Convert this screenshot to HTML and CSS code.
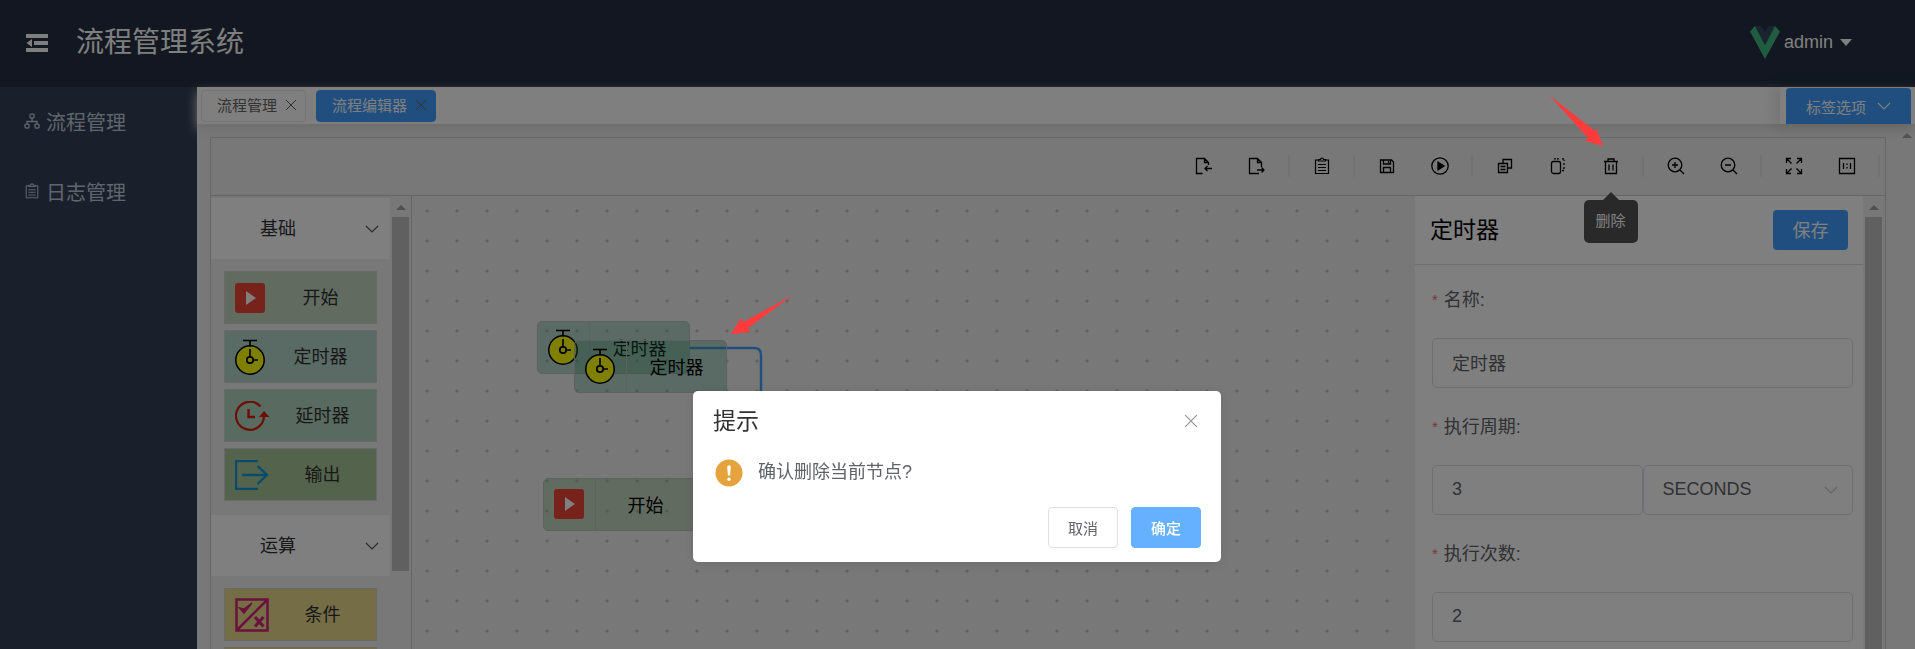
FILE: index.html
```html
<!DOCTYPE html>
<html lang="zh-CN">
<head>
<meta charset="utf-8">
<title>流程管理系统</title>
<link rel="stylesheet" href="styles.css">
</head>
<body>
<svg class="defs" aria-hidden="true">
  <symbol id="i-start" viewBox="0 0 30 30"><rect width="30" height="30" rx="3" fill="#f04438"/><path d="M11 8l10 7-10 7z" fill="#fff"/></symbol>
  <symbol id="i-timer" viewBox="0 0 30 36"><circle cx="15" cy="21" r="14.2" fill="#ff0" stroke="#000" stroke-width="1.5"/><path d="M8 1.500h14M15 1.500v6M15 10v8M18 21h5" stroke="#000" stroke-width="1.600" fill="none"/><circle cx="15" cy="21" r="3.200" fill="none" stroke="#000" stroke-width="1.800"/></symbol>
  <symbol id="i-delay" viewBox="0 0 34 30"><path d="M25.500 5.500A14 14 0 1 0 29 15" fill="none" stroke="#d81e06" stroke-width="2.200"/><path d="M24 16l5-6 5.500 6z" fill="#d81e06"/><path d="M13.500 8v8h6.500" fill="none" stroke="#d81e06" stroke-width="2.400"/></symbol>
  <symbol id="i-out" viewBox="0 0 34 30"><path d="M23 1H1v28h22M7 15h25M22.500 6L32 15l-9.500 9" fill="none" stroke="#1296db" stroke-width="2.400"/></symbol>
  <symbol id="i-cond" viewBox="0 0 34 34"><path d="M1.500 1.500h31v31h-31zM2 32L32 2" fill="none" stroke="#d4237a" stroke-width="2.500"/><path d="M4.500 10l4.500 5 8-10-8 6z" fill="#d4237a" stroke="#d4237a" stroke-width="1.500"/><path d="M20 19l8.500 9.500M28.500 19L20 28.500" stroke="#d4237a" stroke-width="3"/></symbol>
  <symbol id="i-down" viewBox="0 0 14 14"><path d="M1 4l6 6 6-6" fill="none" stroke="currentColor" stroke-width="1.100"/></symbol>
  <symbol id="i-x" viewBox="0 0 12 12"><path d="M1 1l10 10M11 1L1 11" fill="none" stroke="currentColor" stroke-width="1"/></symbol>
  <symbol id="i-list" viewBox="0 0 18 18"><path d="M5 3H2.500v13.500h13V3H13M5.500 4V2.500h2a1.500 1.500 0 0 1 3 0h2V4zM5 7.500h8M5 10.500h8M5 13.500h8" fill="none" stroke="currentColor" stroke-width="1.200"/></symbol>
</svg>

<header class="header">
  <button class="fold" aria-label="折叠菜单"><svg width="22" height="18" viewBox="0 0 22 18"><path d="M0 0h22v4H0zM8 7h14v4H8zM0 14h22v4H0zM6 5v8L0.500 9z" fill="currentColor"/></svg></button>
  <h1 class="logo">流程管理系统</h1>
  <button class="user"><svg width="30" height="33" viewBox="0 0 30 33"><path d="M5 0h6l4 6 4-6h6L15 18z" fill="#35495e"/><path d="M5 0L0 5.500 15 33 30 5.500 25 0 15 19z" fill="#41b883"/></svg>admin<i class="caret"></i></button>
</header>

<div class="body">
  <nav class="side">
    <a href="#flow" class="side-item"><svg width="16" height="16" viewBox="0 0 16 16" fill="none" stroke="currentColor" stroke-width="1.300"><circle cx="8" cy="3" r="2.200"/><circle cx="3" cy="13" r="2.200"/><circle cx="13" cy="13" r="2.200"/><path d="M8 5v3M3 11V8.500h10V11"/></svg>流程管理</a>
    <a href="#log" class="side-item"><svg width="16" height="18"><use href="#i-list"/></svg>日志管理</a>
  </nav>

  <main class="main">
    <div class="tags">
      <div class="tag"><a href="#flow">流程管理</a><button aria-label="关闭流程管理"><svg width="12" height="12"><use href="#i-x"/></svg></button></div>
      <div class="tag tag-on"><a href="#editor">流程编辑器</a><button aria-label="关闭流程编辑器"><svg width="12" height="12"><use href="#i-x"/></svg></button></div>
      <div class="tags-menu"><button>标签选项<svg width="14" height="14"><use href="#i-down"/></svg></button></div>
    </div>

    <div class="content">
      <div class="editor">
        <div class="toolbar">
          <button aria-label="导入"><svg viewBox="0 0 18 18"><path d="M7.500 16.500h-6v-15h8l4 4V8M9.500 1.500v4h4M17 11.500H10M12.500 9L10 11.500l2.500 2.500"/></svg></button>
          <button aria-label="导出"><svg viewBox="0 0 18 18"><path d="M11 16.500H1.500v-15h8l4 4V10M9.500 1.500v4h4M9 13h7M13.500 10.500L16 13l-2.500 2.500"/></svg></button>
          <i class="sep"></i>
          <button aria-label="日志"><svg><use href="#i-list"/></svg></button>
          <i class="sep"></i>
          <button aria-label="保存流程"><svg viewBox="0 0 18 18"><path d="M2.500 3h11l2 2v10.500h-13zM5.500 3v4h7V3M5.500 15.500v-5h7v5M10.500 4v2"/></svg></button>
          <button aria-label="运行"><svg viewBox="0 0 18 18"><circle cx="9" cy="9" r="8.200"/><path d="M7 5.200v7.600L13 9z" fill="currentColor"/></svg></button>
          <i class="sep"></i>
          <button aria-label="复制"><svg viewBox="0 0 18 18"><path d="M7 6V2.500h8.500v8.500H12M2.500 6.500h9v9h-9zM4.500 9.500h5M4.500 12.500h5"/></svg></button>
          <button aria-label="粘贴"><svg viewBox="0 0 18 18"><rect x="2.500" y="4.500" width="9" height="12" rx="2"/><path d="M5 1.800h6M13 1.800h2V4M15 6v2M15 10v2M15 13.500h-2" stroke-dasharray="2 1"/></svg></button>
          <div class="tip-anchor">
            <button aria-label="删除" aria-describedby="tip"><svg viewBox="0 0 18 18"><path d="M2 4.500h14M6 4V2h6v2M3.500 4.500v12h11v-12M7 7.500v6M11 7.500v6"/></svg></button>
            <div class="tip" id="tip" role="tooltip">删除</div>
          </div>
          <i class="sep"></i>
          <button aria-label="放大"><svg viewBox="0 0 18 18"><circle cx="8" cy="8" r="6.800"/><path d="M13 13l4 4M8 5v6M5 8h6"/></svg></button>
          <button aria-label="缩小"><svg viewBox="0 0 18 18"><circle cx="8" cy="8" r="6.800"/><path d="M13 13l4 4M5 8h6"/></svg></button>
          <i class="sep"></i>
          <button aria-label="适应画布"><svg viewBox="0 0 18 18"><path d="M1.500 6V1.500H6M1.500 1.500L6.500 6.500M12 1.500h4.500V6M16.500 1.500l-5 5M1.500 12v4.500H6M1.500 16.500l5-5M16.500 12v4.500H12M16.500 16.500l-5-5"/></svg></button>
          <button aria-label="实际尺寸"><svg viewBox="0 0 18 18"><path d="M1.500 1.500h15v15h-15zM5.500 6v6M12.500 6v6M9 6.500v1.500M9 10v1.500"/></svg></button>
          <i class="sep"></i>
        </div>

        <div class="work">
          <aside class="palette">
            <div class="groups">
              <button class="group-head"><span>基础</span><svg width="14" height="14"><use href="#i-down"/></svg></button>
              <div class="group">
                <div class="item c-start"><svg width="30" height="30"><use href="#i-start"/></svg><span>开始</span></div>
                <div class="item c-timer"><svg width="30" height="36"><use href="#i-timer"/></svg><span>定时器</span></div>
                <div class="item c-delay"><svg width="34" height="30"><use href="#i-delay"/></svg><span>延时器</span></div>
                <div class="item c-out"><svg width="34" height="30"><use href="#i-out"/></svg><span>输出</span></div>
              </div>
              <button class="group-head"><span>运算</span><svg width="14" height="14"><use href="#i-down"/></svg></button>
              <div class="group">
                <div class="item c-cond"><svg width="34" height="34"><use href="#i-cond"/></svg><span>条件</span></div>
                <div class="item c-cond"></div>
              </div>
            </div>
            <div class="bar"><i class="bar-up"></i><i class="bar-thumb thumb-part"></i></div>
          </aside>

          <div class="canvas">
            <svg class="edge" width="80" height="120" viewBox="0 0 80 120"><path d="M0 2h64q7 0 7 7v111" fill="none" stroke="#409eff" stroke-width="2.500"/></svg>
            <div class="node c-timer node-old"><span class="node-icon"><svg width="30" height="36"><use href="#i-timer"/></svg></span><span class="node-name">定时器</span></div>
            <div class="node c-timer node-new"><span class="node-icon"><svg width="30" height="36"><use href="#i-timer"/></svg></span><span class="node-name">定时器</span></div>
            <div class="node c-start node-start"><span class="node-icon"><svg width="30" height="30"><use href="#i-start"/></svg></span><span class="node-name">开始</span></div>
          </div>

          <section class="props">
            <form class="form">
              <div class="form-head"><h2>定时器</h2><button type="button" class="save">保存</button></div>
              <div class="fields">
                <label for="f-name"><em>*</em>名称:</label>
                <input id="f-name" value="定时器">
                <label for="f-cycle"><em>*</em>执行周期:</label>
                <div class="pair">
                  <input id="f-cycle" value="3">
                  <div class="select"><select aria-label="周期单位"><option>SECONDS</option></select><svg width="14" height="14"><use href="#i-down"/></svg></div>
                </div>
                <label for="f-count"><em>*</em>执行次数:</label>
                <input id="f-count" value="2">
              </div>
            </form>
            <div class="bar"><i class="bar-up"></i><i class="bar-thumb"></i></div>
          </section>
        </div>
      </div>
      <div class="bar page-bar"><i class="bar-up"></i></div>
    </div>
  </main>
</div>

<div class="mask">
  <div class="dialog" role="dialog" aria-labelledby="dlg-title">
    <div class="dialog-head"><h2 id="dlg-title">提示</h2><button class="dialog-x" aria-label="关闭"><svg width="14" height="14"><use href="#i-x"/></svg></button></div>
    <div class="dialog-body"><svg width="28" height="28" viewBox="0 0 28 28"><circle cx="14" cy="14" r="13.500" fill="#e6a23c"/><path d="M12.200 8a1.800 1.800 0 0 1 3.600 0l-.7 8.500h-2.200z" fill="#fff"/><circle cx="14" cy="20.300" r="1.700" fill="#fff"/></svg><p>确认删除当前节点?</p></div>
    <div class="dialog-foot"><button class="btn">取消</button><button class="btn btn-ok">确定</button></div>
  </div>
</div>

<svg class="mark mark-node" width="64" height="40" viewBox="0 0 64 40"><path d="M62 1L17 34l2 4-19 2L10 24l2 4z" fill="#ff3b3b"/></svg>
<svg class="mark mark-tool" width="56" height="52" viewBox="0 0 56 52"><path d="M0 0l46 36 1-3 7 18-18-5 3-3z" fill="#ff3b3b"/></svg>
</body>
</html>
```
FILE: styles.css
```css
* { box-sizing: border-box; }

body {
  margin: 0;
  height: 100vh;
  display: flex;
  flex-direction: column;
  overflow: hidden;
  background: #f0f0f0;
  color: #303133;
  font-family: "Liberation Sans", "Noto Sans CJK SC", sans-serif;
  font-size: 18px;
}

button, input, select { font: inherit; color: inherit; margin: 0; }
button { padding: 0; border: 0; background: none; }
a { color: inherit; text-decoration: none; }
h1, h2, p { margin: 0; font-weight: 400; }
svg { flex: none; display: block; }
.defs { position: absolute; width: 0; height: 0; }

.header {
  flex: none;
  height: 87px;
  display: flex;
  align-items: center;
  padding: 0 63px 2px 26px;
  background: #242f42;
  color: #fff;
}
.logo { margin-left: 28px; font-size: 28px; line-height: 40px; }
.user { margin-left: auto; display: flex; align-items: center; gap: 4px; }
.caret {
  margin-left: 3px;
  border: 6px solid transparent;
  border-top: 7px solid #fff;
  border-bottom: 0;
}

.body { flex: 1; min-height: 0; display: flex; }
.side { flex: none; width: 197px; background: #324157; color: #bfcbd9; }
.side-item {
  height: 70px;
  padding: 0 0 2px 24px;
  display: flex;
  align-items: center;
  gap: 6px;
  font-size: 20px;
}
.main {
  flex: 1;
  min-width: 0;
  display: flex;
  flex-direction: column;
}

.tags {
  flex: none;
  height: 37px;
  display: flex;
  align-items: center;
  gap: 10px;
  padding-left: 4px;
  background: #fff;
  box-shadow: 0 5px 10px #ddd;
  color: #666;
  font-size: 15px;
  z-index: 1;
}
.tag {
  height: 32px;
  display: flex;
  align-items: center;
  gap: 8px;
  padding: 0 8px 2px 15px;
  border: 1px solid #e9eaec;
  border-radius: 4px;
}
.tag-on { background: #409eff; border-color: #409eff; color: #fff; }
.tag-on button { color: #666; }
.tags-menu {
  align-self: stretch;
  margin-left: auto;
  padding: 1px 4px 0 6px;
  background: #fff;
  box-shadow: -3px 0 15px 3px rgba(0, 0, 0, .1);
}
.tags-menu button {
  height: 36px;
  padding: 0 20px;
  display: flex;
  align-items: center;
  gap: 11px;
  border-radius: 4px 4px 0 0;
  background: #409eff;
  color: #fff;
}

.content { flex: 1; min-height: 0; display: flex; padding-left: 13px; }
.editor {
  flex: 1;
  min-width: 0;
  margin: 13px 12px 0 0;
  display: flex;
  flex-direction: column;
  border: 1px solid #c8cbd0;
  border-bottom: 0;
}
.toolbar {
  flex: none;
  height: 58px;
  display: flex;
  justify-content: flex-end;
  align-items: center;
  padding-bottom: 2px;
  border-bottom: 1px solid #c8cbd0;
  color: #000;
}
.toolbar button { width: 53px; height: 44px; display: grid; place-items: center; }
.toolbar svg {
  width: 18px;
  height: 18px;
  fill: none;
  stroke: currentColor;
  stroke-width: 1.3;
}
.sep { width: 2px; height: 22px; margin: 0 5px; background: #e4e4e6; }
.tip-anchor { position: relative; }
.tip {
  position: absolute;
  top: 56px;
  left: 50%;
  transform: translateX(-50%);
  padding: 9px 12px 11px;
  border-radius: 5px;
  background: #535353;
  color: #fff;
  font-size: 15px;
  line-height: 23px;
  white-space: nowrap;
  z-index: 2;
}
.tip::before {
  content: "";
  position: absolute;
  left: 50%;
  bottom: 100%;
  margin-left: -8px;
  border: 8px solid transparent;
  border-top: 0;
  border-bottom-color: #535353;
}

.work { flex: 1; min-height: 0; display: flex; }
.palette {
  flex: none;
  width: 201px;
  display: flex;
  justify-content: space-between;
  padding-right: 2px;
  border-right: 1px solid #c8cbd0;
  overflow: hidden;
}
.groups { width: 179px; padding-top: 2px; }
.group-head {
  width: 100%;
  height: 61px;
  padding: 0 11px 0 49px;
  display: flex;
  align-items: center;
  justify-content: space-between;
  background: #fff;
}
.group-head span { padding-bottom: 4px; }
.group-head svg { color: #505154; }
.group { display: grid; gap: 6px; padding: 12px 13px 14px; }
.item {
  height: 53px;
  display: flex;
  align-items: center;
  padding-left: 10px;
  border: 1px solid #cfd2d6;
}
.item svg { margin-right: -34px; }
.item span { flex: 1; padding: 0 0 3px 34px; text-align: center; }

.c-start { background: rgba(92, 158, 80, .3); }
.c-timer { background: rgba(46, 150, 110, .3); }
.c-delay { background: rgba(40, 155, 85, .3); }
.c-out { background: rgba(60, 140, 20, .4); }
.c-cond { background: rgba(225, 195, 40, .5); }

.bar {
  flex: none;
  width: 17px;
  display: flex;
  flex-direction: column;
  background: #f1f1f1;
}
.bar-up {
  margin: 9px 4px 7px;
  border: 5px solid transparent;
  border-top: 0;
  border-bottom-color: #a0a0a0;
}
.bar-thumb { flex: 1; background: #c1c1c1; }
.thumb-part { flex: 0 0 354px; }

.canvas {
  flex: 1;
  min-width: 0;
  position: relative;
  overflow: hidden;
  background: radial-gradient(circle, #c0c0c2 1px, transparent 2px) 0 0 / 30px 30px;
}
.edge { position: absolute; left: 278px; top: 150px; }
.node {
  position: absolute;
  width: 153px;
  height: 53px;
  display: flex;
  border: 1px solid #bcc0c2;
  border-radius: 5px;
  color: #000;
}
.node-old { left: 125px; top: 125px; }
.node-new { left: 162px; top: 144px; }
.node-start { left: 131px; top: 282px; }
.node-icon {
  width: 52px;
  display: grid;
  place-items: center;
  padding: 0 2px 2px 0;
  border-right: 1px solid #bcc0c2;
}
.node-name { flex: 1; display: grid; place-items: center; padding-bottom: 2px; }

.props { flex: none; width: 470px; display: flex; gap: 2px; padding-right: 3px; }
.form { flex: 1; background: #fff; }
.form-head {
  height: 69px;
  display: flex;
  align-items: center;
  justify-content: space-between;
  padding: 0 15px;
  border-bottom: 1px solid #dcdfe6;
  color: #000;
}
.form-head h2 { padding-bottom: 4px; font-size: 23px; }
.save {
  width: 75px;
  height: 40px;
  padding-bottom: 2px;
  border-radius: 4px;
  background: #409eff;
  color: #fff;
}
.fields { padding: 23px 10px 0 17px; color: #606266; }
.fields label { display: flex; gap: 6px; line-height: 24px; }
.fields em { color: #f56c6c; font-size: 15px; font-style: normal; }
.fields input, .fields select {
  width: 100%;
  height: 50px;
  padding: 0 19px 2px;
  border: 1px solid #dcdfe6;
  border-radius: 5px;
  background: #fff;
  outline: 0;
}
.fields > input, .pair { margin: 26px 0 27px; }
.pair { display: grid; grid-template-columns: 1fr 1fr; }
.select { position: relative; }
.select select { appearance: none; }
.select svg { position: absolute; right: 15px; top: 18px; color: #c0c4cc; }

.mask {
  position: fixed;
  inset: 0;
  z-index: 10;
  display: flex;
  justify-content: center;
  align-items: flex-start;
  padding: 391px 1px 0 0;
  background: rgba(0, 0, 0, .5);
}
.dialog {
  width: 528px;
  padding: 15px 20px 14px;
  border-radius: 5px;
  background: #fff;
  box-shadow: 0 2px 12px rgba(0, 0, 0, .1);
}
.dialog-head { display: flex; align-items: center; justify-content: space-between; }
.dialog-head h2 { font-size: 23px; line-height: 30px; }
.dialog-x { padding: 3px; color: #909399; }
.dialog-body {
  display: flex;
  align-items: center;
  gap: 15px;
  padding: 22px 2px 19px;
  color: #606266;
}
.dialog-body p { padding-bottom: 2px; line-height: 28px; }
.dialog-foot { display: flex; justify-content: flex-end; gap: 13px; }
.btn {
  width: 70px;
  height: 41px;
  border: 1px solid #dcdfe6;
  border-radius: 4px;
  color: #606266;
  font-size: 15px;
}
.btn-ok { background: #66b1ff; border-color: #66b1ff; color: #fff; font-weight: 500; }

.mark { position: fixed; z-index: 11; }
.mark-node { left: 731px; top: 294px; }
.mark-tool { left: 1549px; top: 95px; }
```
